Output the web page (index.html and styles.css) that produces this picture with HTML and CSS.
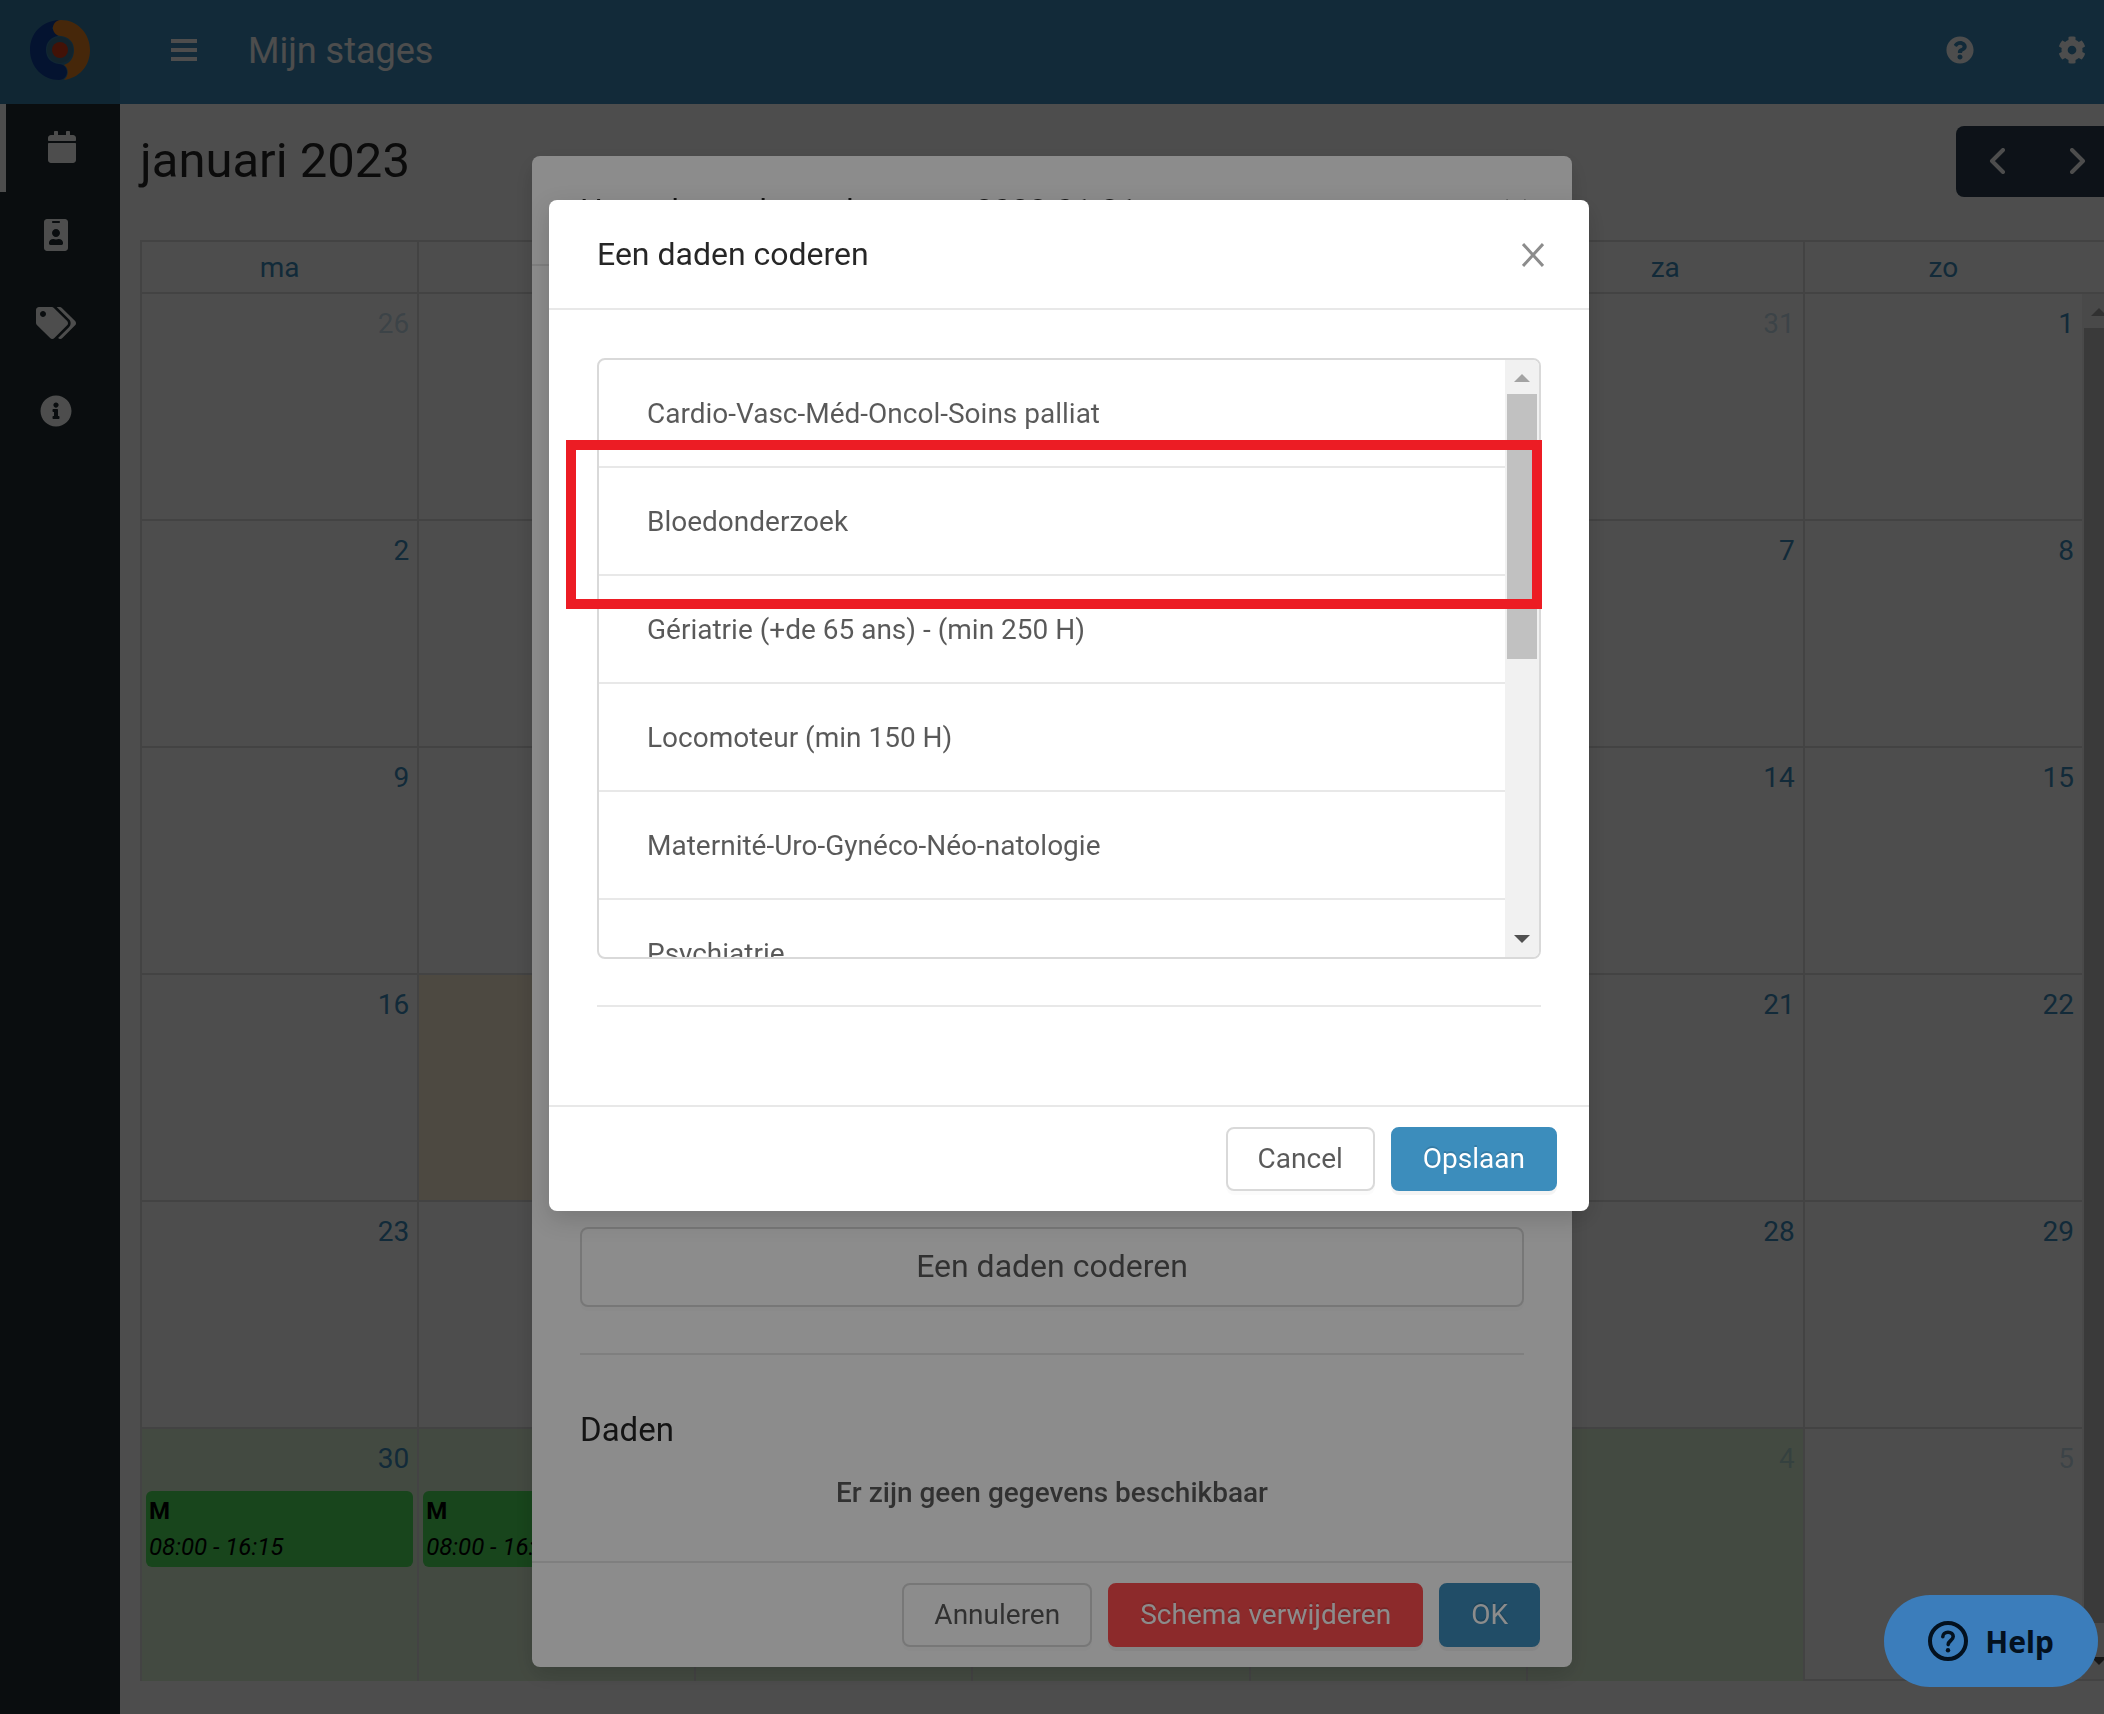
FILE: index.html
```html
<!DOCTYPE html>
<html lang="nl">
<head>
<meta charset="UTF-8">
<meta name="viewport" content="width=device-width, initial-scale=1.0">
<title>Mijn stages</title>
<link rel="stylesheet" href="styles.css">
</head>
<body>
<div class="app">
  <header class="topbar">
    <a class="logo" href="#" aria-label="Home">
      <svg width="60" height="60" viewBox="0 0 60 60">
        <path d="M29 0C12 1 0 13 0 30s13 30 29 30c5 0 8-4 8-8s-3-8-8-8c-8-1-13-6-13-14s5-13 12-14l-6-8z" fill="#0f3fa0"/>
        <path d="M31 0c-5 0-8 4-8 8s3 8 8 8c8 1 13 6 13 14s-4 13-10 15c5 3 5 11 0 15 15-2 26-14 26-30C60 13 47 0 31 0z" fill="#e88324"/>
        <circle cx="30" cy="30" r="13" fill="#3c7592"/>
        <circle cx="30" cy="30" r="8" fill="#d93c1a"/>
      </svg>
    </a>
    <button class="icon-btn menu-btn" aria-label="Menu">
      <svg width="26" height="24" viewBox="0 0 26 24"><path d="M0 1h26v4H0zM0 10h26v4H0zM0 19h26v4H0z" fill="currentColor"/></svg>
    </button>
    <h1 class="page-title">Mijn stages</h1>
    <button class="icon-btn" aria-label="Help">
      <svg width="28" height="28" viewBox="0 0 512 512"><path fill="currentColor" d="M504 256c0 137-111 248-248 248S8 393 8 256 119 8 256 8s248 111 248 248zM262.700 90c-54.500 0-89.300 23-116.500 63.800-3.500 5.300-2.400 12.400 2.700 16.300l34.700 26.300c5.200 3.900 12.600 3 16.700-2.100 17.900-22.700 30.100-35.800 57.300-35.800 20.400 0 45.700 13.100 45.700 33 0 15-12.400 22.700-32.500 34C247.100 238.500 216 254.900 216 296v4c0 6.600 5.400 12 12 12h56c6.600 0 12-5.400 12-12v-1.300c0-28.500 83.200-29.600 83.200-106.700 0-58-60.200-102-116.500-102zM256 338c-25.400 0-46 20.600-46 46s20.600 46 46 46 46-20.600 46-46-20.600-46-46-46z"/></svg>
    </button>
    <button class="icon-btn" aria-label="Instellingen">
      <svg width="28" height="28" viewBox="0 0 512 512"><path fill="currentColor" d="M487.400 315.700l-42.600-24.600c4.300-23.200 4.300-47 0-70.200l42.600-24.600c4.900-2.800 7.100-8.600 5.500-14-11.100-35.600-30-67.800-54.700-94.600-3.800-4.100-10-5.100-14.800-2.300L380.800 110c-17.900-15.400-38.500-27.300-60.800-35.100V25.800c0-5.600-3.900-10.500-9.400-11.700-36.700-8.200-74.300-7.800-109.200 0-5.500 1.200-9.400 6.100-9.400 11.700V75c-22.200 7.900-42.800 19.800-60.800 35.100L88.700 85.500c-4.900-2.800-11-1.900-14.800 2.300-24.700 26.700-43.600 58.900-54.700 94.600-1.700 5.400.6 11.200 5.500 14L67.300 221c-4.300 23.200-4.300 47 0 70.200l-42.600 24.600c-4.900 2.800-7.100 8.600-5.500 14 11.100 35.600 30 67.800 54.700 94.600 3.800 4.100 10 5.100 14.800 2.300l42.600-24.600c17.900 15.400 38.500 27.300 60.800 35.100v49.200c0 5.600 3.900 10.500 9.400 11.700 36.700 8.200 74.300 7.800 109.200 0 5.500-1.200 9.400-6.100 9.400-11.700v-49.200c22.200-7.900 42.800-19.800 60.800-35.100l42.600 24.600c4.900 2.800 11 1.900 14.800-2.300 24.700-26.700 43.600-58.900 54.700-94.600 1.500-5.500-.7-11.300-5.600-14.100zM256 336c-44.100 0-80-35.900-80-80s35.900-80 80-80 80 35.900 80 80-35.900 80-80 80z"/></svg>
    </button>
  </header>

  <div class="layout">
    <nav class="sidebar">
      <a class="active" href="#" aria-label="Kalender">
        <svg width="28" height="32" viewBox="0 0 448 512"><path fill="currentColor" d="M12 192h424c6.600 0 12 5.400 12 12v260c0 26.500-21.500 48-48 48H48c-26.500 0-48-21.500-48-48V204c0-6.600 5.400-12 12-12zm436-44v-36c0-26.500-21.500-48-48-48h-48V12c0-6.600-5.400-12-12-12h-40c-6.600 0-12 5.400-12 12v52H160V12c0-6.600-5.400-12-12-12h-40c-6.600 0-12 5.400-12 12v52H48C21.500 64 0 85.500 0 112v36c0 6.600 5.400 12 12 12h424c6.600 0 12-5.400 12-12z"/></svg>
      </a>
      <a href="#" aria-label="Profiel">
        <svg width="24" height="32" viewBox="0 0 384 512"><path fill="currentColor" d="M336 0H48C21.500 0 0 21.500 0 48v416c0 26.500 21.500 48 48 48h288c26.500 0 48-21.500 48-48V48c0-26.500-21.500-48-48-48zM144 32h96c8.800 0 16 7.200 16 16s-7.200 16-16 16h-96c-8.800 0-16-7.200-16-16s7.200-16 16-16zm48 128c35.300 0 64 28.700 64 64s-28.700 64-64 64-64-28.700-64-64 28.700-64 64-64zm112 236.800c0 10.600-10 19.200-22.400 19.200H102.400C90 416 80 407.400 80 396.800v-19.200c0-31.800 30.100-57.600 67.200-57.600h5c12.300 5.100 25.700 8 39.800 8s27.600-2.900 39.800-8h5c37.100 0 67.200 25.800 67.200 57.600v19.200z"/></svg>
      </a>
      <a href="#" aria-label="Labels">
        <svg width="40" height="32" viewBox="0 0 640 512"><path fill="currentColor" d="M497.900 225.900L286.100 14.100A48 48 0 0 0 252.100 0H48C21.500 0 0 21.500 0 48v204.100a48 48 0 0 0 14.100 33.900l211.800 211.900c18.700 18.700 49.100 18.700 67.900 0l204.100-204.100c18.700-18.700 18.700-49.100 0-67.900zM112 160c-26.500 0-48-21.500-48-48s21.500-48 48-48 48 21.500 48 48-21.500 48-48 48zm513.900 133.800L421.800 497.900c-18.700 18.700-49.100 18.700-67.900 0l-.4-.4L527.600 323.500c17-17 26.400-39.600 26.400-63.600s-9.400-46.600-26.400-63.600L331.400 0h48.700a48 48 0 0 1 33.900 14.100l211.900 211.800c18.700 18.700 18.700 49.100 0 67.900z"/></svg>
      </a>
      <a href="#" aria-label="Info">
        <svg width="32" height="32" viewBox="0 0 512 512"><path fill="currentColor" d="M256 8C119 8 8 119.100 8 256c0 137 111 248 248 248s248-111 248-248C504 119.100 393 8 256 8zm0 110c23.200 0 42 18.800 42 42s-18.800 42-42 42-42-18.800-42-42 18.800-42 42-42zm56 254c0 6.600-5.400 12-12 12h-88c-6.600 0-12-5.400-12-12v-24c0-6.600 5.400-12 12-12h12v-64h-12c-6.600 0-12-5.400-12-12v-24c0-6.600 5.400-12 12-12h64c6.600 0 12 5.400 12 12v100h12c6.600 0 12 5.400 12 12v24z"/></svg>
      </a>
    </nav>

    <main class="content">
      <div class="cal-toolbar">
        <h2>januari 2023</h2>
        <div class="cal-nav">
          <button aria-label="Vorige maand"><svg width="16" height="26" viewBox="0 0 16 26"><path d="M14 2L3 13l11 11"/></svg></button>
          <button aria-label="Volgende maand"><svg width="16" height="26" viewBox="0 0 16 26"><path d="M2 2l11 11L2 24"/></svg></button>
        </div>
      </div>
      <div class="calendar">
        <div class="cal-head">
          <table>
            <thead><tr><th>ma</th><th>di</th><th>wo</th><th>do</th><th>vr</th><th>za</th><th>zo</th></tr></thead>
          </table>
        </div>
        <div class="cal-body">
          <table>
            <tbody>
              <tr><td class="other">26</td><td class="other">27</td><td class="other">28</td><td class="other">29</td><td class="other">30</td><td class="other">31</td><td>1</td></tr>
              <tr><td>2</td><td>3</td><td>4</td><td>5</td><td>6</td><td>7</td><td>8</td></tr>
              <tr><td>9</td><td>10</td><td>11</td><td>12</td><td>13</td><td>14</td><td>15</td></tr>
              <tr><td>16</td><td class="today">17</td><td>18</td><td>19</td><td>20</td><td>21</td><td>22</td></tr>
              <tr><td>23</td><td>24</td><td>25</td><td>26</td><td>27</td><td>28</td><td>29</td></tr>
              <tr>
                <td class="stage">30<div class="event"><b>M</b><i>08:00 - 16:15</i></div></td>
                <td class="stage">31<div class="event"><b>M</b><i>08:00 - 16:15</i></div></td>
                <td class="stage other">1</td><td class="stage other">2</td><td class="stage other">3</td><td class="stage other">4</td><td class="other">5</td>
              </tr>
            </tbody>
          </table>
          <div class="scrollbar"><span class="arrow up"></span><span class="thumb"></span><span class="arrow down"></span></div>
        </div>
      </div>
    </main>
  </div>
</div>

<div class="mask">
  <section class="modal" role="dialog" aria-label="Het schema bewerken">
    <div class="modal-header">
      <h3>Het schema bewerken voor 2023-01-31</h3>
      <button class="close" aria-label="Sluiten"><svg width="22" height="24" viewBox="0 0 22 24"><path d="M1 1l20 22M21 1L1 23"/></svg></button>
    </div>
    <div class="modal-body day-body">
      <button class="btn btn-block">Een daden coderen</button>
      <hr>
      <h4>Daden</h4>
      <p class="empty">Er zijn geen gegevens beschikbaar</p>
    </div>
    <div class="modal-footer">
      <button class="btn">Annuleren</button>
      <button class="btn btn-danger">Schema verwijderen</button>
      <button class="btn btn-primary">OK</button>
    </div>
  </section>
</div>

<div class="mask mask-top">
  <section class="modal" role="dialog" aria-label="Een daden coderen">
    <div class="modal-header">
      <h3>Een daden coderen</h3>
      <button class="close" aria-label="Sluiten"><svg width="22" height="24" viewBox="0 0 22 24"><path d="M1 1l20 22M21 1L1 23"/></svg></button>
    </div>
    <div class="modal-body">
      <div class="list-wrap">
        <div class="list">
          <ul>
            <li>Cardio-Vasc-Méd-Oncol-Soins palliat</li>
            <li>Bloedonderzoek</li>
            <li>Gériatrie (+de 65 ans) - (min 250 H)</li>
            <li>Locomoteur (min 150 H)</li>
            <li>Maternité-Uro-Gynéco-Néo-natologie</li>
            <li>Psychiatrie</li>
          </ul>
          <div class="scrollbar"><span class="arrow up"></span><span class="thumb"></span><span class="arrow down"></span></div>
        </div>
        <div class="highlight"></div>
      </div>
      <hr>
    </div>
    <div class="modal-footer">
      <button class="btn">Cancel</button>
      <button class="btn btn-primary">Opslaan</button>
    </div>
  </section>
</div>

<button class="help">
  <svg width="40" height="40" viewBox="0 0 20 20"><path fill="none" stroke="currentColor" stroke-width="2" d="M10 1a9 9 0 1 1 0 18 9 9 0 0 1 0-18z"/><path fill="none" stroke="currentColor" stroke-width="1.800" stroke-linecap="round" d="M7.400 7.900c0-1.300 1.100-2.300 2.600-2.300s2.600.9 2.600 2.200c0 1.900-2.500 2-2.500 4"/><circle cx="10" cy="14.600" r="1.100" fill="currentColor"/></svg>
  Help
</button>
</body>
</html>
```
FILE: styles.css
```css
* {
  box-sizing: border-box;
}
body {
  margin: 0;
  height: 100vh;
  overflow: hidden;
  font-family: Roboto, sans-serif;
  font-size: 28px;
  line-height: 44px;
  color: rgba(0, 0, 0, 0.65);
  background-color: #fff;
}
h1, h2, h3, h4, p {
  margin: 0;
  font-weight: 400;
}
button {
  font-family: inherit;
  font-size: inherit;
  cursor: pointer;
}
svg {
  display: block;
}

.app {
  width: calc(100% + 34px);
  height: 100vh;
  display: flex;
  flex-direction: column;
}
.topbar {
  display: flex;
  align-items: center;
  height: 104px;
  flex: none;
  padding-right: 10px;
  background-color: #3c8dbc;
  color: #fff;
}
.logo {
  display: flex;
  align-items: center;
  justify-content: center;
  width: 120px;
  height: 100%;
  padding-bottom: 4px;
  background-color: #367fa9;
}
.icon-btn {
  display: flex;
  justify-content: center;
  width: 112px;
  padding: 0 0 4px;
  border: none;
  background: none;
  color: inherit;
}
.menu-btn {
  width: 128px;
}
.page-title {
  flex: 1;
  padding-bottom: 2px;
  font-size: 36px;
}
.layout {
  display: flex;
  flex: 1;
  min-height: 0;
}
.sidebar {
  width: 120px;
  flex: none;
  background-color: #222d32;
}
.sidebar a {
  display: flex;
  align-items: center;
  justify-content: center;
  height: 88px;
  padding: 0 8px 2px 0;
  color: #fff;
}
.sidebar .active {
  padding-right: 2px;
  border-left: 6px solid #fff;
}
.content {
  flex: 1;
  display: flex;
  flex-direction: column;
  padding: 20px 20px 33px;
}

/* calendar */
.cal-toolbar {
  display: flex;
  justify-content: space-between;
  align-items: center;
  height: 74px;
  margin-bottom: 42px;
  color: rgba(0, 0, 0, 0.85);
}
.cal-toolbar h2 {
  font-size: 49px;
}
.cal-nav {
  display: flex;
  height: 71px;
  border-radius: 8px;
  background-color: #2c3e50;
}
.cal-nav button {
  display: flex;
  align-items: center;
  justify-content: center;
  width: 81px;
  padding: 0;
  border: none;
  background: none;
}
.cal-nav path {
  fill: none;
  stroke: #fff;
  stroke-width: 4;
  stroke-linecap: round;
  stroke-linejoin: round;
}
.calendar {
  flex: 1;
  display: flex;
  flex-direction: column;
  min-height: 0;
  border: 2px solid #ddd;
}
.cal-head {
  padding-right: 34px;
  border-bottom: 2px solid #ddd;
}
.calendar table {
  width: 100%;
  table-layout: fixed;
  border-collapse: separate;
  border-spacing: 0;
  color: #3c8dbc;
}
.calendar th {
  height: 50px;
  padding: 2px 0 0;
  font-weight: 400;
  border-right: 2px solid #ddd;
}
.calendar th:last-child, .calendar td:last-child {
  border-right: none;
}
.cal-body {
  flex: 1;
  display: flex;
  min-height: 0;
}
.calendar td {
  height: 227px;
  padding: 8px 8px 0 0;
  vertical-align: top;
  text-align: right;
  border-right: 2px solid #ddd;
  border-bottom: 2px solid #ddd;
}
.calendar tr:last-child td {
  height: 252px;
  border-bottom: none;
}
.calendar .other {
  color: rgba(60, 141, 188, 0.3);
}
.calendar .today {
  background-color: #fdf2d8;
}
.calendar .stage {
  background-color: #dff5d8;
}
.event {
  display: flex;
  flex-direction: column;
  height: 76px;
  margin: 10px -4px 0 4px;
  padding: 2px 3px;
  border-radius: 6px;
  background-color: #4fe45c;
  color: #000;
  font-size: 24px;
  line-height: 36px;
  text-align: left;
}
.event b {
  font-weight: 700;
}

/* scrollbars */
.scrollbar {
  display: flex;
  flex-direction: column;
  align-items: center;
  justify-content: space-between;
  width: 34px;
  flex: none;
  background-color: #f1f1f1;
}
.arrow {
  width: 16px;
  height: 8px;
  margin: 12px 0 14px;
  background-color: #505050;
  clip-path: polygon(0 0, 100% 0, 50% 100%);
}
.arrow.up {
  margin: 14px 0 12px;
  background-color: #a3a3a3;
  clip-path: polygon(50% 0, 100% 100%, 0 100%);
}
.thumb {
  width: 30px;
  flex: none;
  height: 265px;
  margin-bottom: auto;
  background-color: #c1c1c1;
}
.cal-body .thumb {
  height: 1295px;
}

/* modals */
.mask {
  position: fixed;
  inset: 0;
  display: flex;
  justify-content: center;
  align-items: flex-start;
  padding-top: 156px;
  background-color: rgba(0, 0, 0, 0.45);
}
.mask-top {
  padding-top: 200px;
  padding-left: 34px;
}
.modal {
  width: 1040px;
  background-color: #fff;
  border-radius: 8px;
  box-shadow: 0 8px 24px rgba(0, 0, 0, 0.15);
}
.modal-header {
  display: flex;
  justify-content: space-between;
  align-items: center;
  height: 110px;
  padding: 0 45px 0 48px;
  border-bottom: 2px solid #e8e8e8;
}
.modal-header h3 {
  font-size: 32px;
  color: rgba(0, 0, 0, 0.85);
}
.close {
  padding: 2px 0 0;
  border: none;
  background: none;
}
.close path {
  fill: none;
  stroke: #8c8c8c;
  stroke-width: 3;
}
.modal-body {
  padding: 48px 48px 98px;
}
.modal-body hr {
  height: 2px;
  margin: 46px 0 0;
  border: none;
  background-color: #e8e8e8;
}
.day-body {
  padding: 961px 48px 46px;
}
.day-body h4 {
  margin-top: 53px;
  font-size: 33px;
  color: rgba(0, 0, 0, 0.85);
}
.empty {
  margin-top: 19px;
  font-weight: 500;
  text-align: center;
}
.list-wrap {
  position: relative;
}
.list {
  display: flex;
  height: 601px;
  overflow: hidden;
  border: 2px solid #d9d9d9;
  border-radius: 8px;
}
.list ul {
  flex: 1;
  margin: 0;
  padding: 0;
  list-style: none;
}
.list li {
  height: 108px;
  padding: 32px 48px 30px;
  border-bottom: 2px solid #e8e8e8;
}
/* red frame round the chosen item */
.highlight {
  position: absolute;
  top: 82px;
  left: -31px;
  right: -1px;
  height: 169px;
  border: 10px solid #ec1c24;
}
.modal-footer {
  display: flex;
  justify-content: flex-end;
  gap: 16px;
  padding: 20px 32px;
  border-top: 2px solid #e8e8e8;
}
.btn {
  height: 64px;
  padding: 0 30px 2px;
  border: 2px solid #d9d9d9;
  border-radius: 8px;
  background-color: #fff;
  color: rgba(0, 0, 0, 0.65);
  box-shadow: 0 4px 0 rgba(0, 0, 0, 0.016);
}
.btn-block {
  display: block;
  width: 100%;
  height: 80px;
  font-size: 32px;
}
.btn-primary, .btn-danger {
  border-color: #3c8dbc;
  background-color: #3c8dbc;
  color: #fff;
  text-shadow: 0 -2px 0 rgba(0, 0, 0, 0.12);
  box-shadow: 0 4px 0 rgba(0, 0, 0, 0.045);
}
.btn-danger {
  border-color: #ff4d4f;
  background-color: #ff4d4f;
}

.help {
  position: fixed;
  right: 6px;
  bottom: 27px;
  display: flex;
  align-items: center;
  gap: 17px;
  height: 92px;
  padding: 0 44px;
  border: none;
  border-radius: 46px;
  background-color: #3b7dbb;
  color: #03111f;
  font-family: "Noto Sans", sans-serif;
  font-size: 30px;
  font-weight: 700;
}
```
